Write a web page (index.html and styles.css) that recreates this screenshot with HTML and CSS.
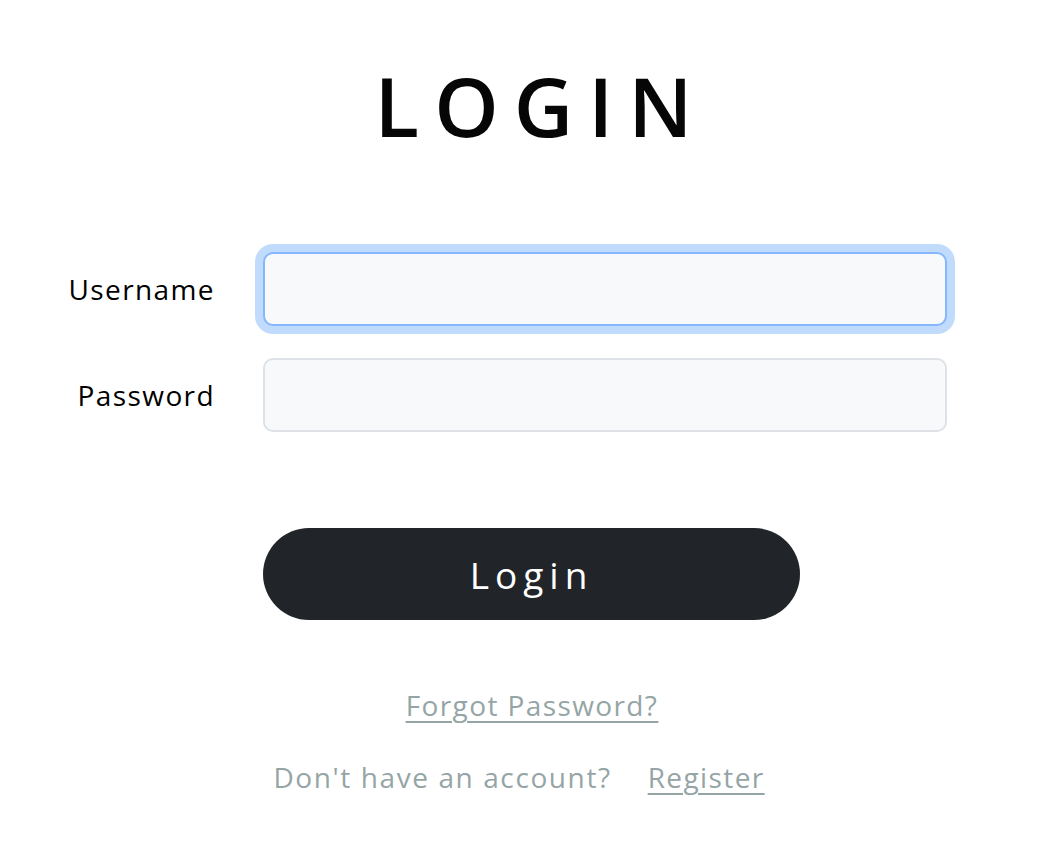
FILE: index.html
```html
<!DOCTYPE html>
<html lang="en">
<head>
<meta charset="utf-8">
<title>Login</title>
<link rel="stylesheet" href="styles.css">
</head>
<body>
<main class="page">
  <h1 class="title">LOGIN</h1>
  <form class="form">
    <div class="row">
      <label class="label" for="u">Username</label>
      <input class="field field-focus" id="u" type="text">
    </div>
    <div class="row">
      <label class="label" for="p">Password</label>
      <input class="field" id="p" type="password">
    </div>
    <div class="actions">
      <button class="btn" type="button">Login</button>
    </div>
  </form>
  <div class="links">
    <a class="link" href="#">Forgot Password?</a>
    <p class="register"><span class="muted">Don't have an account?</span><a class="link" href="#">Register</a></p>
  </div>
</main>
</body>
</html>
```
FILE: styles.css
```css
* { box-sizing: border-box; }
html, body { margin: 0; padding: 0; background: #fff; }
body {
  font-family: "Open Sans", "DejaVu Sans", sans-serif;
  color: #000;
  width: 1046px;
  height: 856px;
  overflow: hidden;
}
.page {
  display: flex;
  flex-direction: column;
  padding-top: 60px;
}
.title {
  margin: 0;
  text-align: center;
  font-weight: 600;
  font-size: 82px;
  line-height: 90px;
  letter-spacing: 15px;
  padding-left: 36px;
  color: #060606;
}
.form {
  margin-top: 102px;
  display: flex;
  flex-direction: column;
  gap: 32px;
}
.row {
  display: grid;
  grid-template-columns: 215px 684px;
  column-gap: 48px;
  align-items: center;
}
.label {
  text-align: right;
  font-size: 28px;
  font-weight: 500;
  letter-spacing: 1.4px;
  color: #000;
}
.field {
  height: 74px;
  border: 2px solid #dee2e6;
  border-radius: 10px;
  background: #f8f9fa;
  outline: none;
  font: inherit;
}
.field-focus {
  border-color: #86b7fe;
  box-shadow: 0 0 0 8px #c1dbfd;
}
.actions {
  margin-top: 64px;
  padding-left: 263px;
}
.btn {
  width: 537px;
  height: 92px;
  border: none;
  border-radius: 46px;
  background: #212529;
  color: #fff;
  font-family: inherit;
  font-size: 37px;
  letter-spacing: 6px;
  padding: 0 0 0 0;
}
.links {
  margin-top: 66px;
  padding-left: 18px;
  display: flex;
  flex-direction: column;
  align-items: center;
}
.link {
  color: #95a5a6;
  font-size: 28px;
  letter-spacing: 1.4px;
  text-decoration: underline;
  text-underline-offset: 5px;
  text-decoration-thickness: 2px;
}
.register {
  margin: 34px 0 0;
  display: flex;
  gap: 36px;
  padding-right: 26px;
}
.muted {
  color: #95a5a6;
  font-size: 28px;
  letter-spacing: 1.6px;
}
```
